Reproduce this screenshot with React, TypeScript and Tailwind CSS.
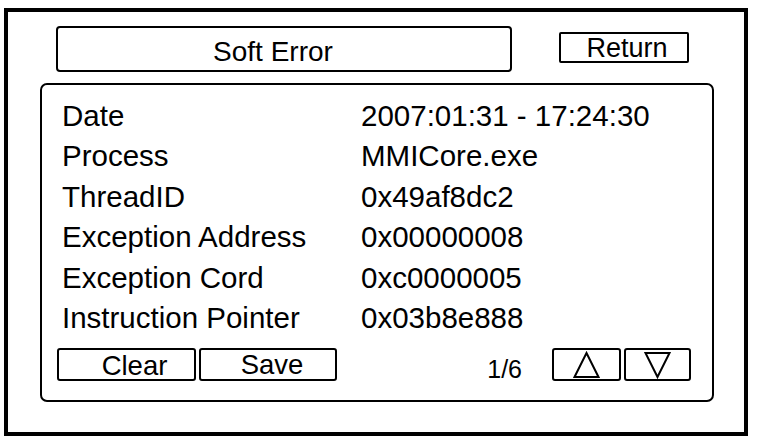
import React from 'react';

const rows: [string, string][] = [
  ['Date', '2007:01:31 - 17:24:30'],
  ['Process', 'MMICore.exe'],
  ['ThreadID', '0x49af8dc2'],
  ['Exception Address', '0x00000008'],
  ['Exception Cord', '0xc0000005'],
  ['Instruction Pointer', '0x03b8e888'],
];

function Triangle({ down }: { down?: boolean }) {
  return (
    <svg width="27" height="28" viewBox="0 0 27 28" fill="none">
      <polygon
        points={down ? '1.5,2 25.5,2 13.5,26' : '13.5,2 25.5,26 1.5,26'}
        stroke="black"
        strokeWidth="2"
        strokeLinejoin="miter"
      />
    </svg>
  );
}

export default function App() {
  return (
    <div
      className="w-[768px] h-[448px] bg-white pl-[4px] pt-[8px] text-black"
      style={{ fontFamily: '"Liberation Sans", Arial, sans-serif' }}
    >
      <div className="w-[744px] h-[428px] border-4 border-black flex flex-col">
        {/* Header */}
        <div className="flex items-start pt-[14px] pl-[48px]">
          <div className="w-[456px] h-[46px] border-2 border-black rounded-[4px] flex items-center justify-center text-[28px] leading-none pr-[22px] pt-[5px]">
            Soft Error
          </div>
          <div className="ml-[47px] mt-[6px] w-[130px] h-[31px] border-2 border-black rounded-[2px] flex items-center justify-center text-[27px] leading-none pl-[6px] pt-[2px]">
            Return
          </div>
        </div>

        {/* Panel */}
        <div className="ml-[32px] mt-[11px] w-[674px] h-[319px] border-2 border-black rounded-[7px] flex flex-col">
          <div className="pt-[10px] pl-[20px] text-[29.5px]">
            {rows.map(([label, value]) => (
              <div key={label} className="flex h-[40.5px] items-center leading-none">
                <div className="w-[299px]">{label}</div>
                <div>{value}</div>
              </div>
            ))}
          </div>

          <div className="flex items-center mt-[9px] pl-[15px] pr-[21px]">
            <div className="flex gap-[3px]">
              <button className="w-[139px] h-[33px] border-2 border-black rounded-[3px] flex items-center justify-center text-[27.5px] leading-none pt-[3px] pl-[16px]">
                Clear
              </button>
              <button className="w-[138px] h-[33px] border-2 border-black rounded-[3px] flex items-center justify-center text-[27.5px] leading-none pl-[8px]">
                Save
              </button>
            </div>
            <div className="flex-1" />
            <div className="text-[25px] leading-none pt-[10px]">1/6</div>
            <div className="flex gap-[3px] ml-[30px]">
              <button className="w-[69px] h-[33px] border-2 border-black rounded-[3px] flex items-center justify-center">
                <Triangle />
              </button>
              <button className="w-[67px] h-[33px] border-2 border-black rounded-[3px] flex items-center justify-center">
                <Triangle down />
              </button>
            </div>
          </div>
        </div>
      </div>
    </div>
  );
}
